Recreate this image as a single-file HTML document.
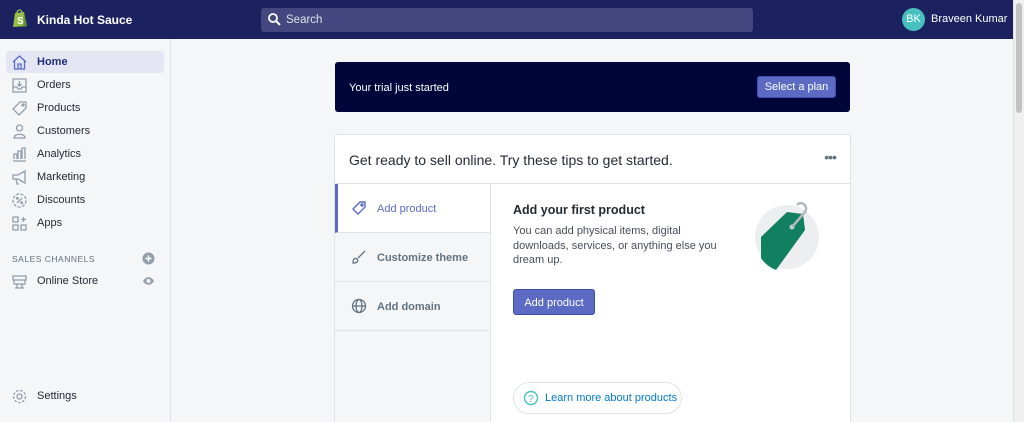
<!DOCTYPE html>
<html><head><meta charset="utf-8"><style>
*{box-sizing:border-box;margin:0;padding:0}
html,body{width:1024px;height:422px;overflow:hidden}
body{background:#f4f6f8;font-family:"Liberation Sans",sans-serif;color:#212b36;position:relative}
.top{position:absolute;left:0;top:0;width:1013px;height:39px;background:#1c2260}
.logo{position:absolute;left:12px;top:9px}
.shop{position:absolute;left:37px;top:13px;color:#fff;font-size:12px;font-weight:bold}
.search{position:absolute;left:261px;top:8px;width:492px;height:24px;background:#43467f;border-radius:3px;color:#dfe3e8;font-size:11.5px;padding:6px 0 0 25px}
.search svg{position:absolute;left:7px;top:5px}
.av{position:absolute;left:902px;top:8px;width:23px;height:23px;border-radius:50%;background:#47c1bf;color:#fff;font-size:11px;text-align:center;line-height:23px}
.user{position:absolute;left:931px;top:13px;color:#fff;font-size:11px}
.sb{position:absolute;right:0;top:0;width:11px;height:422px;background:#f0f0f0;border-left:1px solid #e3e3e3}
.sb div{position:absolute;left:2px;top:3px;width:6px;height:110px;background:#c2c2c2;border-radius:3px}
.side{position:absolute;left:0;top:39px;width:171px;height:383px;border-right:1px solid #dfe3e8}
.nav{position:absolute;left:6px;width:158px;height:22px;font-size:11px;padding:5px 0 0 31px;color:#212b36}
.nav.act{background:#e4e6f4;border-radius:3px;color:#202e78;font-weight:bold}
.nav svg{position:absolute;left:5px;top:3px}
.sc{position:absolute;left:12px;top:215px;font-size:8.5px;color:#637381;letter-spacing:.5px}
.banner{position:absolute;left:335px;top:62px;width:515px;height:50px;background:#000639;border-radius:3px;color:#fff;font-size:11px;padding:20px 0 0 14px}
.btn{position:absolute;background:#5c6ac4;border:1px solid #3f4eae;border-radius:3px;color:#fff;font-size:11px;text-align:center}
.card{position:absolute;left:335px;top:135px;width:515px;height:287px;background:#fff;border-radius:3px 3px 0 0;box-shadow:0 0 0 1px #dfe3e8;overflow:hidden}
.ch{height:49px;border-bottom:1px solid #dfe3e8;font-size:14px;padding:17px 0 0 14px}
.tabs{position:absolute;left:0;top:49px;width:156px;height:238px;background:#f4f6f8;border-right:1px solid #dfe3e8}
.tab{position:relative;height:49px;border-bottom:1px solid #dfe3e8;font-size:11px;color:#637381;padding:19px 0 0 42px;font-weight:bold}
.tab svg{position:absolute;left:16px;top:16px}
.tab.act{background:#fff;color:#5c6ac4;border-left:3px solid #5c6ac4;padding-left:39px;font-weight:normal}
.tab.act svg{left:13px}
</style></head><body>
<div class="top">
<svg class="logo" width="16" height="19" viewBox="0 0 16 19"><path d="M3 4 L12 3 L15 17 L1 18 Z" fill="#95bf47"/><path d="M5 4 C5 0 10 0 10 4" stroke="#95bf47" stroke-width="1.3" fill="none"/><path d="M12 3 L15 17 L11 18 Z" fill="#5e8e3e"/><text x="5" y="15" fill="#fff" font-size="10" font-weight="bold" font-family="Liberation Sans">S</text></svg>
<div class="shop">Kinda Hot Sauce</div>
<div class="search"><svg width="13" height="13" viewBox="0 0 13 13"><circle cx="5" cy="5" r="4" stroke="#fff" stroke-width="1.8" fill="none"/><path d="M8 8 L12 12" stroke="#fff" stroke-width="2"/></svg>Search</div>
<div class="av">BK</div><div class="user">Braveen Kumar</div>
</div>
<div class="sb"><div></div></div>
<div class="side">
<div class="nav act" style="top:12px"><svg width="17" height="17" viewBox="0 0 17 17" fill="none" stroke="#5c6ac4" stroke-width="1.3"><path d="M2 8 L8.5 2 L15 8 M3.5 7 V15 H13.5 V7 M7 15 V10 H10 V15"/></svg>Home</div>
<div class="nav" style="top:35px"><svg width="17" height="17" viewBox="0 0 17 17" fill="none" stroke="#919eab" stroke-width="1.3"><path d="M2 2 H15 V15 H2 Z M2 10 H6 L7 12 H10 L11 10 H15 M8.5 4 V9 M6.5 7 L8.5 9 L10.5 7"/></svg>Orders</div>
<div class="nav" style="top:58px"><svg width="17" height="17" viewBox="0 0 17 17" fill="none" stroke="#919eab" stroke-width="1.3"><path d="M9 2 H15 V8 L8 15 L2 9 Z"/><circle cx="12" cy="5" r="1"/></svg>Products</div>
<div class="nav" style="top:81px"><svg width="17" height="17" viewBox="0 0 17 17" fill="none" stroke="#919eab" stroke-width="1.3"><circle cx="8.5" cy="5" r="3"/><path d="M3 15 C3 10 14 10 14 15 Z"/></svg>Customers</div>
<div class="nav" style="top:104px"><svg width="17" height="17" viewBox="0 0 17 17" fill="none" stroke="#919eab" stroke-width="1.3"><path d="M2 15 H15 M3 13 V8 H6 V13 M7 13 V5 H10 V13 M11 13 V2 H14 V13"/></svg>Analytics</div>
<div class="nav" style="top:127px"><svg width="17" height="17" viewBox="0 0 17 17" fill="none" stroke="#919eab" stroke-width="1.3"><path d="M2 6 H7 L14 2 V14 L7 10 H2 Z M5 10 L6 15 H8"/></svg>Marketing</div>
<div class="nav" style="top:150px"><svg width="17" height="17" viewBox="0 0 17 17" fill="none" stroke="#919eab" stroke-width="1.3"><circle cx="8.5" cy="8.5" r="6.5" stroke-dasharray="3 1.5"/><path d="M6 11 L11 6"/><circle cx="6.3" cy="6.3" r=".8"/><circle cx="10.7" cy="10.7" r=".8"/></svg>Discounts</div>
<div class="nav" style="top:173px"><svg width="17" height="17" viewBox="0 0 17 17" fill="none" stroke="#919eab" stroke-width="1.3"><path d="M2 2 H7 V7 H2 Z M2 10 H7 V15 H2 Z M10 10 H15 V15 H10 Z M12.5 2 V7 M10 4.5 H15"/></svg>Apps</div>
<div class="sc">SALES CHANNELS</div>
<svg style="position:absolute;left:142px;top:213px" width="13" height="13"><circle cx="6.5" cy="6.5" r="6" fill="#919eab"/><path d="M6.5 3.5 V9.5 M3.5 6.5 H9.5" stroke="#fff" stroke-width="1.6"/></svg>
<div class="nav" style="top:231px"><svg width="17" height="17" viewBox="0 0 17 17" fill="none" stroke="#919eab" stroke-width="1.3"><path d="M2 3 H15 V7 H2 Z M3 7 V11 H14 V7 M6 11 V15 M11 11 V15 M4 15 H13"/></svg>Online Store</div>
<svg style="position:absolute;left:142px;top:237px" width="13" height="10"><path d="M1 5 C4 0 9 0 12 5 C9 10 4 10 1 5 Z" fill="#919eab"/><circle cx="6.5" cy="5" r="2" fill="#f4f6f8"/></svg>
<div class="nav" style="top:346px"><svg width="17" height="17" viewBox="0 0 17 17" fill="none" stroke="#919eab" stroke-width="1.3"><circle cx="8.5" cy="8.5" r="2.5"/><circle cx="8.5" cy="8.5" r="6" stroke-dasharray="2.5 1.6"/></svg>Settings</div>
</div>
<div class="banner">Your trial just started<div class="btn" style="left:422px;top:14px;width:79px;height:22px;padding-top:4px">Select a plan</div></div>
<div class="card">
<div class="ch">Get ready to sell online. Try these tips to get started.<span style="position:absolute;right:14px;top:15px;font-size:14px;color:#637381;letter-spacing:-1px;line-height:14px">•••</span></div>
<div class="tabs">
<div class="tab act"><svg width="16" height="16" viewBox="0 0 16 16" fill="none" stroke="#5c6ac4" stroke-width="1.4"><path d="M9 2 H14 V7 L7 14 L2 9 Z"/><circle cx="11" cy="5" r="1"/></svg>Add product</div>
<div class="tab"><svg width="16" height="16" viewBox="0 0 16 16" fill="none" stroke="#637381" stroke-width="1.3"><path d="M14 2 L7 9 M3 10 C5 8 8 11 6 13 C5 14 2 14 2 14 C2 14 2 11 3 10 Z"/></svg>Customize theme</div>
<div class="tab"><svg width="16" height="16" viewBox="0 0 16 16" fill="none" stroke="#637381" stroke-width="1.3"><circle cx="8" cy="8" r="6.5"/><ellipse cx="8" cy="8" rx="3" ry="6.5"/><path d="M1.5 8 H14.5"/></svg>Add domain</div>
</div>
<div style="position:absolute;left:178px;top:68px;font-size:12.5px;font-weight:bold">Add your first product</div>
<div style="position:absolute;left:178px;top:89px;width:215px;font-size:11px;line-height:14.5px;color:#454f5b">You can add physical items, digital downloads, services, or anything else you dream up.</div>
<div class="btn" style="left:178px;top:154px;width:82px;height:26px;padding-top:7px">Add product</div>
<svg style="position:absolute;left:416px;top:65px" width="68" height="70" viewBox="0 0 68 70"><circle cx="36" cy="37" r="32" fill="#eceeef"/><path d="M10 37 L36 12 L52 14 L54 30 L25 70 Q15 66 10 58 Z" fill="#108060"/><circle cx="41" cy="27" r="2.5" fill="#c4cdd5"/><path d="M41 27 L54 12 C58 6 50 0 46 5" stroke="#b4b9be" stroke-width="2.5" fill="none"/></svg>
<div style="position:absolute;left:178px;top:247px;width:169px;height:32px;border:1px solid #dfe3e8;border-radius:16px;font-size:11px;color:#007ace;padding:9px 0 0 31px"><svg style="position:absolute;left:9px;top:7px" width="16" height="16"><circle cx="8" cy="8" r="6.5" stroke="#47c1bf" stroke-width="1.4" fill="none"/><text x="5" y="12" font-size="10" fill="#47c1bf" font-family="Liberation Sans">?</text></svg>Learn more about products</div>
</div>
</body></html>
